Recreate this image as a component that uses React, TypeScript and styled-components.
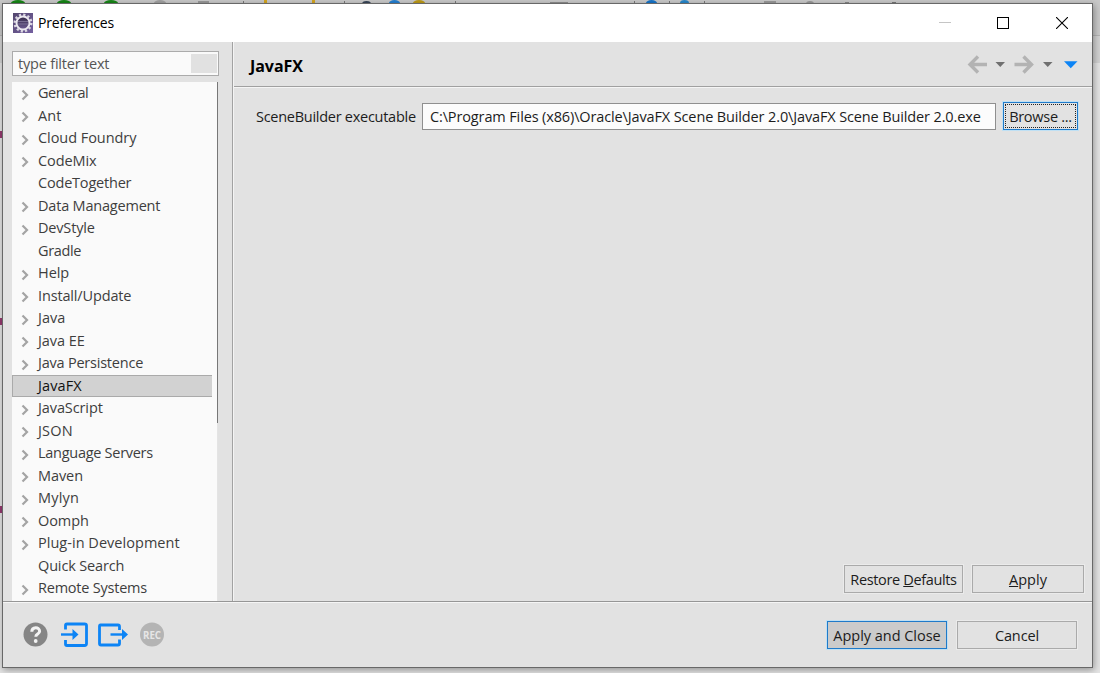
import React from "react";
import styled, { createGlobalStyle } from "styled-components";

const Global = createGlobalStyle`
  * { box-sizing: border-box; }
  body { margin: 0; overflow: hidden; background: #cfcfcf; }
`;

const Desktop = styled.div`
  position: relative;
  width: 1100px;
  height: 673px;
  padding: 3px 7px 5px 2px;
  overflow: hidden;
  background: linear-gradient(#c9c9c9 0 35px, #b4b4b4 35px 36px, #d2d2d2 36px 63px, #e4e4e4 63px);
  font-family: "Open Sans", "Noto Sans", sans-serif;
  font-size: 14.5px;
  color: #1c1c1c;
`;

const Speck = styled.i<{ $x: number; $y?: number; $w: number; $h?: number; $c: string; $round?: boolean }>`
  position: absolute;
  left: ${(p) => p.$x}px;
  top: ${(p) => p.$y ?? 0}px;
  width: ${(p) => p.$w}px;
  height: ${(p) => p.$h ?? 3}px;
  background: ${(p) => p.$c};
  border-radius: ${(p) => (p.$round ? "50% 50% 0 0 / 100% 100% 0 0" : "0")};
`;

const Window = styled.div`
  position: relative;
  display: flex;
  flex-direction: column;
  width: 1091px;
  height: 665px;
  border: 1px solid #686868;
  background: #e2e2e2;
  box-shadow: 1px 2px 7px rgba(0, 0, 0, 0.36);
`;

const TitleBar = styled.div`
  display: flex;
  align-items: center;
  height: 38px;
  flex: none;
  padding: 0 1px 0 10px;
  background: #fff;
`;

const Title = styled.span`
  flex: 1;
  padding: 0 0 2px 5px;
  font-size: 14px;
  letter-spacing: -0.18px;
  color: #000;
`;

const Caption = styled.span`
  display: flex;
  justify-content: center;
  width: 58.5px;
`;

const Body = styled.div`
  display: flex;
  height: 559px;
  flex: none;
`;

const Sidebar = styled.div`
  width: 230px;
  padding: 9px 14px 0 9px;
  border-right: 1px solid #a2a2a2;
`;

const Filter = styled.div`
  display: flex;
  align-items: center;
  justify-content: space-between;
  width: 207px;
  height: 25px;
  padding: 2px 1px 2px 5px;
  border: 1px solid #ababab;
  background: #fafafa;
  color: #555;
`;

const FilterText = styled.span`
  padding-bottom: 1px;
  letter-spacing: -0.2px;
`;

const FilterButton = styled.span`
  width: 26px;
  height: 19px;
  background: #e1e1e1;
`;

const Tree = styled.div`
  display: flex;
  width: 206px;
  height: 519px;
  margin-top: 6px;
  overflow: hidden;
  background: #fafafa;
`;

const Rows = styled.div`
  width: 200px;
  margin-right: 5px;
`;

const ScrollTrack = styled.div`
  width: 1px;
  height: 519px;
  background: #e4e4e4;
`;

const Thumb = styled.div`
  height: 341px;
  background: #777;
`;

const Row = styled.div<{ $selected?: boolean }>`
  display: flex;
  align-items: center;
  height: 22.5px;
  color: ${(p) => (p.$selected ? "#111" : "#3e3e3e")};
  background: ${(p) => (p.$selected ? "#d2d2d2" : "transparent")};
  box-shadow: ${(p) => (p.$selected ? "inset 1px 1px 0 #aaa, inset 0 -1px 0 #aaa" : "none")};
`;

const Name = styled.span<{ $track: number }>`
  padding-bottom: 1px;
  letter-spacing: ${(p) => p.$track}px;
  white-space: nowrap;
`;

const Twist = styled.span`
  display: flex;
  width: 26px;
  padding: 3px 0 0 9px;
`;

const Page = styled.div`
  flex: 1;
  display: flex;
  flex-direction: column;
  border-left: 1px solid #f4f4f4;
`;

const Header = styled.div`
  display: flex;
  align-items: center;
  justify-content: space-between;
  height: 45px;
  padding: 0 14px 0 16px;
  border-bottom: 1px solid #a0a0a0;
  box-shadow: 0 1px 0 #f5f5f5;
`;

const Heading = styled.h1`
  margin: 4px 0 0;
  font-size: 16px;
  font-weight: 700;
  letter-spacing: -0.05px;
  color: #000;
`;

const Field = styled.div`
  display: flex;
  align-items: flex-start;
  flex: 1;
  padding: 15px 14px 0 22px;
`;

const FieldLabel = styled.label`
  width: 166px;
  line-height: 29px;
  letter-spacing: -0.27px;
  white-space: nowrap;
`;

const PathBox = styled.div`
  width: 574px;
  height: 27px;
  margin: 1px 7px 0 0;
  padding-left: 7px;
  border: 1px solid #8f8f8f;
  background: #fcfcfc;
  line-height: 25px;
  letter-spacing: -0.13px;
  white-space: nowrap;
`;

const Button = styled.button<{ $w: number; $kind?: "focus" | "primary"; $track: number }>`
  width: ${(p) => p.$w}px;
  height: 28px;
  padding: 0;
  border: 1px solid ${(p) => (p.$kind ? "#1f7ac9" : "#aaa")};
  outline: ${(p) => (p.$kind ? "none" : "1px solid #ebebeb")};
  border-radius: 0;
  background: ${(p) => (p.$kind === "primary" ? "#cbcbcb" : "#e2e2e2")};
  box-shadow: ${(p) => (p.$kind ? "0 0 0 1px #bfe0f4" : "none")};
  font: inherit;
  letter-spacing: ${(p) => p.$track}px;
  line-height: 25px;
  white-space: nowrap;
  color: #1c1c1c;
`;

const FocusRing = styled.span`
  display: block;
  height: 24px;
  margin: 0 1px;
  border: 1px dotted #222;
  line-height: 24px;
`;

const PageActions = styled.div`
  display: flex;
  justify-content: flex-end;
  gap: 9px;
  padding: 0 8px 8px 0;
`;

const Footer = styled.div`
  display: flex;
  align-items: center;
  flex: 1;
  padding: 1px 15px 0 20px;
  gap: 10px;
  border-top: 1px solid #969696;
  box-shadow: inset 0 1px 0 #f5f5f5;
`;

const FooterIcons = styled.div`
  flex: 1;
  display: flex;
`;

const items: [string, boolean, number][] = [
  ["General", true, -0.45], ["Ant", true, 0.05], ["Cloud Foundry", true, -0.05], ["CodeMix", true, -0.1],
  ["CodeTogether", false, -0.2], ["Data Management", true, -0.2], ["DevStyle", true, -0.18], ["Gradle", false, -0.38],
  ["Help", true, -0.05], ["Install/Update", true, -0.15], ["Java", true, 0], ["Java EE", true, -0.05],
  ["Java Persistence", true, -0.22], ["JavaFX", false, 0.1], ["JavaScript", true, -0.1], ["JSON", true, 0.2],
  ["Language Servers", true, -0.28], ["Maven", true, -0.08], ["Mylyn", true, 0.2], ["Oomph", true, -0.1],
  ["Plug-in Development", true, 0.03], ["Quick Search", false, -0.15], ["Remote Systems", true, -0.22],
];

const GearIcon = () => (
  <svg width="20" height="20" viewBox="0 0 20 20">
    <defs>
      <linearGradient id="tile" x1="0" y1="0" x2="1" y2="1">
        <stop offset="0" stopColor="#54476e" />
        <stop offset="1" stopColor="#7460a0" />
      </linearGradient>
      <linearGradient id="core" x1="0" y1="0" x2="0" y2="1">
        <stop offset="0" stopColor="#352a48" />
        <stop offset="1" stopColor="#6d5c92" />
      </linearGradient>
    </defs>
    <rect width="20" height="20" fill="url(#tile)" />
    <circle cx="10" cy="10" r="8.3" fill="none" stroke="#dcd8e2" strokeWidth="2.4" strokeDasharray="2.2 2.145" />
    <circle cx="10" cy="10" r="6.5" fill="url(#core)" stroke="#ece9f0" strokeWidth="2" />
    <path d="M5 8.5h10M4.6 11h10.8" stroke="#8b81a3" strokeWidth=".7" />
  </svg>
);

const NavIcons = () => (
  <svg width="112" height="24" viewBox="0 0 112 24">
    <g fill="none" stroke="#b3b3b3" strokeWidth="3.4">
      <path d="M21 12.500H4M12 4.500 4 12.500 12 20.500" />
      <path d="M48.500 12.500H65.500M57.500 4.500l8 8L57.500 20.500" />
    </g>
    <path d="M29.500 10h9.500l-4.750 5zM77 10h9.500l-4.750 5z" fill="#707070" />
    <path d="M98 9.200h13.500l-6.750 7z" fill="#0c84f5" />
  </svg>
);

const FooterGlyphs = () => (
  <svg width="144" height="28" viewBox="0 0 144 28">
    <circle cx="12.500" cy="13.500" r="12" fill="#858585" />
    <path d="M8.800 10.800c0-5.400 7.800-5.200 7.800-.6 0 3.100-3.800 2.700-3.800 5.600" fill="none" stroke="#f3f3f3" strokeWidth="3" />
    <circle cx="12.700" cy="20" r="1.900" fill="#f3f3f3" />
    <g fill="none" stroke="#0d84f5" strokeWidth="2.800">
      <path d="M42.500 8.500V4.500Q42.500 3 44 3H61.500Q63.500 3 63.500 4.500V22.500Q63.500 24.500 61.500 24.500H44Q42.500 24.500 42.500 23V19" />
      <path d="M38 13.500H53" strokeWidth="2.400" />
      <path d="M96.500 9V5.500Q96.500 4 95 4H77.500Q76.500 4 76.500 5.500V22.500Q76.500 24 78 24H95Q96.500 24 96.500 22.500V18.500" />
      <path d="M87.500 13.500H101" strokeWidth="2.400" />
    </g>
    <path d="M49.500 8 55.500 13.500l-6 5.500zM99 8 105 13.500l-6 5.500z" fill="#0d84f5" />
    <circle cx="129" cy="13.500" r="12" fill="#b4b4b4" />
    <text x="129" y="17.500" textAnchor="middle" fontSize="10.500" fontWeight="700" textLength="18" lengthAdjust="spacingAndGlyphs" fill="#e6e6e6">REC</text>
  </svg>
);

export default function App() {
  return (
    <Desktop>
      <Global />
      {[11, 57, 104].map((x) => <Speck key={x} $x={x} $w={14} $c="#178617" $round />)}
      <Speck $x={154} $w={12} $c="#a2a2a2" $round />
      <Speck $x={198} $y={1} $w={11} $c="#999" />
      {[243, 344, 455, 634, 669, 704].map((x) => <Speck key={x} $x={x} $y={1} $w={1} $c="#777" />)}
      <Speck $x={264} $w={3} $c="#d5a51d" />
      <Speck $x={312} $w={3} $c="#d5a51d" />
      <Speck $x={362} $y={1} $w={9} $c="#374557" $round />
      <Speck $x={389} $w={11} $c="#2580d2" $round />
      <Speck $x={413} $w={12} $c="#bd9a17" $round />
      <Speck $x={550} $y={2} $w={18} $c="#8e8e8e" />
      <Speck $x={646} $w={11} $c="#1774c9" $round />
      <Speck $x={680} $w={9} $c="#2888cc" $round />
      <Speck $x={764} $y={1} $w={12} $c="#999" />
      <Speck $x={806} $y={1} $w={8} $c="#999" $round />
      <Speck $x={845} $y={2} $w={4} $c="#888" />
      <Speck $x={892} $y={2} $w={4} $c="#777" />
      {[131, 318, 506].map((y) => <Speck key={y} $x={0} $y={y} $w={2} $h={7} $c="#963a70" />)}
      <Window>
        <TitleBar>
          <GearIcon />
          <Title>Preferences</Title>
          <Caption>
            <svg width="12" height="12"><path d="M0 5.500h12" stroke="#c5c5c5" /></svg>
          </Caption>
          <Caption>
            <svg width="12" height="12"><rect x=".5" y=".5" width="11" height="11" fill="none" stroke="#000" /></svg>
          </Caption>
          <Caption>
            <svg width="12" height="12"><path d="M0 0 12 12M12 0 0 12" stroke="#000" strokeWidth="1.100" /></svg>
          </Caption>
        </TitleBar>
        <Body>
          <Sidebar>
            <Filter><FilterText>type filter text</FilterText><FilterButton /></Filter>
            <Tree>
              <Rows>
                {items.map(([name, parent, track]) => (
                  <Row key={name} $selected={name === "JavaFX"}>
                    <Twist>
                      {parent && (
                        <svg width="9" height="12"><path d="M1.500 1.500 6 6 1.500 10.500" fill="none" stroke="#a4a4a4" strokeWidth="2.200" /></svg>
                      )}
                    </Twist>
                    <Name $track={track}>{name}</Name>
                  </Row>
                ))}
              </Rows>
              <ScrollTrack><Thumb /></ScrollTrack>
            </Tree>
          </Sidebar>
          <Page>
            <Header>
              <Heading>JavaFX</Heading>
              <NavIcons />
            </Header>
            <Field>
              <FieldLabel>SceneBuilder executable</FieldLabel>
              <PathBox>C:\Program Files (x86)\Oracle\JavaFX Scene Builder 2.0\JavaFX Scene Builder 2.0.exe</PathBox>
              <Button $w={75} $kind="focus" $track={-0.28}><FocusRing>Browse ...</FocusRing></Button>
            </Field>
            <PageActions>
              <Button $w={119} $track={-0.35}>Restore <u>D</u>efaults</Button>
              <Button $w={112} $track={0.05}><u>A</u>pply</Button>
            </PageActions>
          </Page>
        </Body>
        <Footer>
          <FooterIcons><FooterGlyphs /></FooterIcons>
          <Button $w={120} $kind="primary" $track={-0.03}>Apply and Close</Button>
          <Button $w={120} $track={-0.1}>Cancel</Button>
        </Footer>
      </Window>
    </Desktop>
  );
}
